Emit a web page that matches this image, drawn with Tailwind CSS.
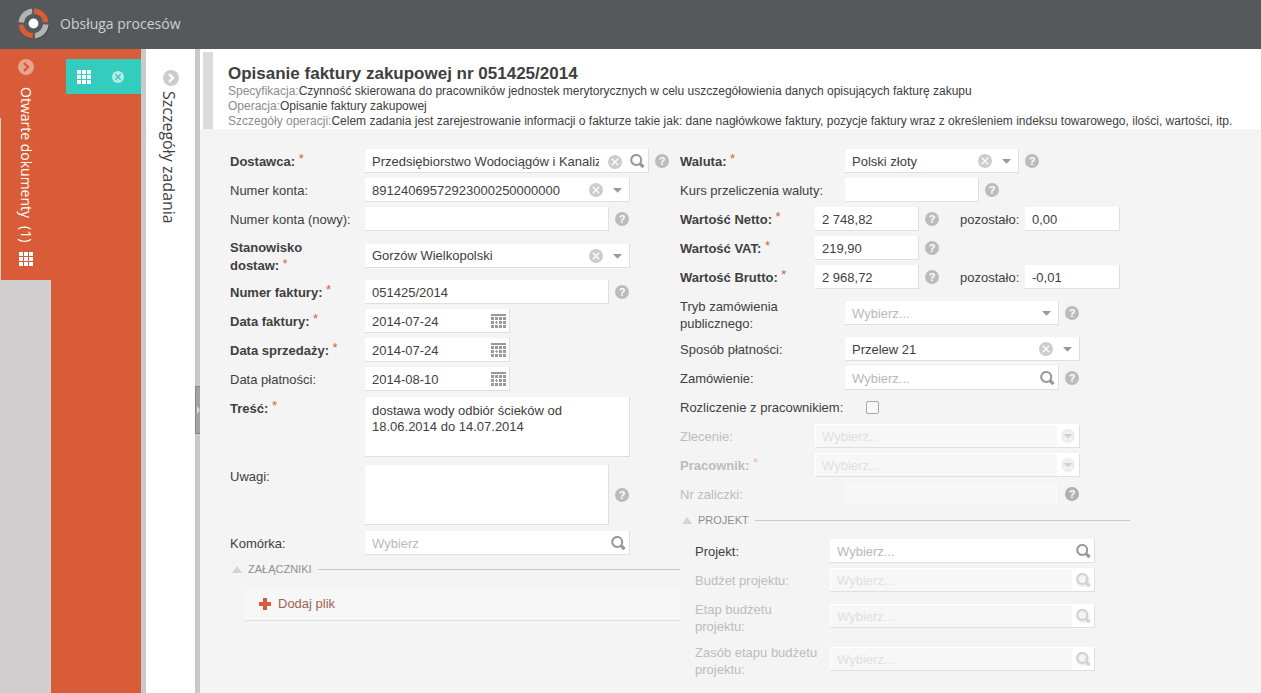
<!DOCTYPE html>
<html lang="pl">
<head>
<meta charset="utf-8">
<title>Obsługa procesów</title>
<script src="https://cdn.jsdelivr.net/npm/@tailwindcss/browser@4"></script>
</head>
<body class="flex min-h-screen flex-col bg-[#f4f4f4] font-['Liberation_Sans',Arial,sans-serif] text-[13px] text-[#404040]">

<svg class="hidden" aria-hidden="true">
  <symbol id="clear" viewBox="0 0 14 14"><circle cx="7" cy="7" r="7" fill="#cccccc"/><path d="M3.8 3.8l6.4 6.4M10.2 3.8l-6.4 6.4" stroke="#fff" stroke-width="1.3"/></symbol>
  <symbol id="search" viewBox="0 0 15 15"><circle cx="6.200" cy="6" r="5" fill="none" stroke="#999" stroke-width="2.100"/><path d="M10 9.600l3.500 3.500" stroke="#999" stroke-width="3.400"/></symbol>
  <symbol id="search-off" viewBox="0 0 15 15"><circle cx="7" cy="7" r="7" fill="#f0f0f0"/><circle cx="6.200" cy="6" r="5" fill="none" stroke="#d2d2d2" stroke-width="2.100"/><path d="M10 9.600l3.500 3.500" stroke="#d2d2d2" stroke-width="3.400"/><path d="M4 4l5 5M9 4l-5 5" stroke="#fff" stroke-width="1"/></symbol>
  <symbol id="caret" viewBox="0 0 9 5"><path d="M0 0h9L4.500 4.800z" fill="#999"/></symbol>
  <symbol id="caret-off" viewBox="0 0 14 14"><circle cx="7" cy="7" r="7" fill="#eeeeee"/><path d="M3.500 4l7 6.500M10.500 4l-7 6.500" stroke="#fff" stroke-width="1"/><path d="M2.500 5h9L7 9.500z" fill="#d2d2d2"/></symbol>
  <symbol id="calendar" viewBox="0 0 15 15"><path fill="#999" d="M0 0h15v2H0zM0 3h3v3H0zM4 3h3v3H4zM8 3h3v3H8zM12 3h3v3h-3zM0 7h3v3H0zM5 7h1v1h1v1H6v1H5V9H4V8h1zM8 7h3v3H8zM12 7h3v3h-3zM0 11h3v3H0zM4 11h3v3H4zM8 11h3v3H8zM12 11h3v3h-3z"/></symbol>
  <symbol id="grid" viewBox="0 0 14 14"><path fill="#fff" d="M0 0h4v4H0zM5 0h4v4H5zM10 0h4v4h-4zM0 5h4v4H0zM5 5h4v4H5zM10 5h4v4h-4zM0 10h4v4H0zM5 10h4v4H5zM10 10h4v4h-4z"/></symbol>
</svg>

<header class="flex h-[49px] shrink-0 items-center bg-[#55595c] pb-[2px] pl-[18px]">
  <svg class="size-8" viewBox="0 0 32 32" aria-hidden="true">
    <g fill="none" stroke-width="5.400">
      <g stroke="#3f4244"><path d="M18 4.300A12.200 12.200 0 0 1 28.300 15"/><path d="M28.400 17.500A12.200 12.200 0 0 1 17.800 28.400"/><path d="M14.500 28.500A12.200 12.200 0 0 1 4 18"/></g>
      <path d="M16 3.200A12.300 12.300 0 0 1 27.800 14.600" stroke="#d75c37"/>
      <path d="M27.800 16.500A12.300 12.300 0 0 1 16.800 27.700" stroke="#b3b3b3"/>
      <path d="M14.900 27.800A12.300 12.300 0 0 1 3.200 16.500" stroke="#d75c37"/>
      <path d="M3.200 14.500A12.300 12.300 0 0 1 14.200 3.300" stroke="#b3b3b3"/>
    </g>
    <path d="M13.500 0l2.600 3.200-2.600 3M31 13.500l-3.200 2.600-3-2.600M17.500 31l-2.600-3.200 2.600-3M0 17.500l3.200-2.600 3 2.600" fill="none" stroke="#55595c" stroke-width="1"/>
    <circle cx="15.500" cy="15.500" r="4.900" fill="#fff"/>
  </svg>
  <h1 class="ml-[10px] font-['Open_Sans',sans-serif] text-[14px] text-[#cfcfcf]">Obsługa procesów</h1>
</header>

<div class="flex flex-1">
  <nav class="relative flex w-[51px] shrink-0 flex-col bg-[#d0cece]" aria-label="Otwarte dokumenty">
    <div class="flex h-[231px] flex-col items-center bg-[#d75c37] pt-[10px]">
      <button aria-label="Rozwiń"><svg class="block size-4" viewBox="0 0 16 16"><circle cx="8" cy="8" r="8" fill="#e9a28c"/><path d="M6 4l4 4-4 4" fill="none" stroke="#d75c37" stroke-width="2.400"/></svg></button>
      <div class="mt-3 flex h-[160px] items-center gap-2 whitespace-nowrap font-['Open_Sans',sans-serif] text-[14px] leading-5 text-white [writing-mode:vertical-rl]"><span>Otwarte dokumenty</span><span>(1)</span></div>
      <svg class="mt-[5px] size-[14px]"><use href="#grid"/></svg>
    </div>
    <div class="absolute top-[69px] left-0 h-[162px] w-px bg-[#d0cece]"></div>
  </nav>

  <section class="w-[95px] shrink-0 border-r-[5px] border-[#c9c9c9] bg-[#d75c37] pt-[10px] pl-[15px]">
    <div class="flex h-[35px] items-center bg-[#34ccbe] pl-[11px]">
      <button aria-label="Dokument"><svg class="block size-[14px]"><use href="#grid"/></svg></button>
      <button class="ml-[21px]" aria-label="Zamknij dokument"><svg class="block size-3" viewBox="0 0 12 12"><circle cx="6" cy="6" r="6" fill="#b6ece7"/><path d="M3.300 3.300l5.400 5.400M8.700 3.300L3.300 8.700" stroke="#34ccbe" stroke-width="1.400"/></svg></button>
    </div>
  </section>

  <section class="relative flex w-[54px] shrink-0 flex-col items-center border-r-[5px] border-[#c9c9c9] bg-white pt-[21px]">
    <button aria-label="Rozwiń szczegóły"><svg class="block size-4" viewBox="0 0 16 16"><circle cx="8" cy="8" r="8" fill="#cccccc"/><path d="M6 4l4 4-4 4" fill="none" stroke="#fff" stroke-width="2.400"/></svg></button>
    <h2 class="mt-[5px] mr-1 whitespace-nowrap font-['Open_Sans',sans-serif] text-[16px] leading-5 text-[#404040] [writing-mode:vertical-rl]">Szczegóły zadania</h2>
    <button class="absolute top-[337px] -right-[5px] flex h-12 w-[5px] items-center border border-r-0 border-[#858585] bg-[#a3a3a3]" aria-label="Zwiń panel"><svg class="h-2 w-1" viewBox="0 0 4 8"><path d="M1 0l3 4-3 4z" fill="#ddd"/></svg></button>
  </section>

  <main class="min-w-0 flex-1">
    <div class="flex bg-white pt-[3px] pl-[3px]">
      <div class="w-[10px] shrink-0 bg-[#dcdcdc]"></div>
      <div class="h-[77px] pt-3 pl-[15px] text-[12px] leading-[15px] whitespace-nowrap">
        <h2 class="mb-[1px] text-[17px] leading-[19px] font-bold">Opisanie faktury zakupowej nr 051425/2014</h2>
        <p><span class="text-[#8c8c8c]">Specyfikacja:</span>Czynność skierowana do pracowników jednostek merytorycznych w celu uszczegółowienia danych opisujących fakturę zakupu</p>
        <p><span class="text-[#8c8c8c]">Operacja:</span>Opisanie faktury zakupowej</p>
        <p><span class="text-[#8c8c8c]">Szczegóły operacji:</span>Celem zadania jest zarejestrowanie informacji o fakturze takie jak: dane nagłówkowe faktury, pozycje faktury wraz z określeniem indeksu towarowego, ilości, wartości, itp.</p>
      </div>
    </div>

    <form class="grid max-w-[930px] grid-cols-2 pt-5 pl-[30px]">
      <div class="flex flex-col gap-[5px]">
        <div class="flex h-6 items-center">
          <label for="dostawca" class="w-[135px] shrink-0 pt-[2px] font-bold">Dostawca: <span class="align-[3px] leading-none font-normal text-[#d75c37]">*</span></label>
          <div class="flex h-6 w-[284px] items-center border-r border-b border-[#dfdfdf] bg-white pt-[2px] pr-[3px] pl-[7px]">
            <input id="dostawca" value="Przedsiębiorstwo Wodociągów i Kanalizacji" class="mr-[9px] h-full min-w-0 flex-1">
            <button type="button" aria-label="Wyczyść"><svg class="block size-[14px]"><use href="#clear"/></svg></button>
            <button type="button" class="ml-2" aria-label="Szukaj"><svg class="block size-[15px]"><use href="#search"/></svg></button>
          </div>
          <button type="button" class="ml-[6px] size-[14px] rounded-full bg-[#bbb] text-[11px] leading-[14px] font-bold text-white" aria-label="Pomoc">?</button>
        </div>
        <div class="flex h-6 items-center">
          <label for="konto" class="w-[135px] shrink-0 pt-[2px]">Numer konta:</label>
          <div class="relative h-6 w-[265px] border-r border-b border-[#dfdfdf] bg-white">
            <select id="konto" class="block h-full w-full appearance-none pt-[2px] pl-[7px]"><option>89124069572923000250000000</option></select>
            <button type="button" class="absolute top-[5px] right-[26px]" aria-label="Wyczyść"><svg class="block size-[14px]"><use href="#clear"/></svg></button>
            <svg class="pointer-events-none absolute top-[10px] right-[7px] h-[5px] w-[9px]"><use href="#caret"/></svg>
          </div>
        </div>
        <div class="flex h-6 items-center">
          <label for="konto-nowe" class="w-[135px] shrink-0 pt-[2px]">Numer konta (nowy):</label>
          <input id="konto-nowe" class="h-6 w-[244px] border-r border-b border-[#dfdfdf] bg-white px-[7px] pt-[2px]">
          <button type="button" class="ml-[6px] size-[14px] rounded-full bg-[#bbb] text-[11px] leading-[14px] font-bold text-white" aria-label="Pomoc">?</button>
        </div>
        <div class="flex h-[39px] items-center">
          <label for="stanowisko" class="w-[135px] shrink-0 pt-[3px] pr-10 leading-[18px] font-bold">Stanowisko dostaw: <span class="align-[2px] text-[12px] leading-none font-normal text-[#d75c37]">*</span></label>
          <div class="relative h-6 w-[265px] border-r border-b border-[#dfdfdf] bg-white">
            <select id="stanowisko" class="block h-full w-full appearance-none pt-[2px] pl-[7px]"><option>Gorzów Wielkopolski</option></select>
            <button type="button" class="absolute top-[5px] right-[26px]" aria-label="Wyczyść"><svg class="block size-[14px]"><use href="#clear"/></svg></button>
            <svg class="pointer-events-none absolute top-[10px] right-[7px] h-[5px] w-[9px]"><use href="#caret"/></svg>
          </div>
        </div>
        <div class="flex h-6 items-center">
          <label for="nr-faktury" class="w-[135px] shrink-0 pt-[2px] font-bold">Numer faktury: <span class="align-[3px] leading-none font-normal text-[#d75c37]">*</span></label>
          <input id="nr-faktury" value="051425/2014" class="h-6 w-[244px] border-r border-b border-[#dfdfdf] bg-white px-[7px] pt-[2px]">
          <button type="button" class="ml-[6px] size-[14px] rounded-full bg-[#bbb] text-[11px] leading-[14px] font-bold text-white" aria-label="Pomoc">?</button>
        </div>
        <div class="flex h-6 items-center">
          <label for="data-faktury" class="w-[135px] shrink-0 pt-[2px] font-bold">Data faktury: <span class="align-[3px] leading-none font-normal text-[#d75c37]">*</span></label>
          <div class="flex h-6 w-[145px] items-center border-r border-b border-[#dfdfdf] bg-white pt-[2px] pr-[3px] pl-[7px]">
            <input id="data-faktury" value="2014-07-24" class="h-full min-w-0 flex-1">
            <button type="button" aria-label="Kalendarz"><svg class="block size-[15px]"><use href="#calendar"/></svg></button>
          </div>
        </div>
        <div class="flex h-6 items-center">
          <label for="data-sprzedazy" class="w-[135px] shrink-0 pt-[2px] font-bold">Data sprzedaży: <span class="align-[3px] leading-none font-normal text-[#d75c37]">*</span></label>
          <div class="flex h-6 w-[145px] items-center border-r border-b border-[#dfdfdf] bg-white pt-[2px] pr-[3px] pl-[7px]">
            <input id="data-sprzedazy" value="2014-07-24" class="h-full min-w-0 flex-1">
            <button type="button" aria-label="Kalendarz"><svg class="block size-[15px]"><use href="#calendar"/></svg></button>
          </div>
        </div>
        <div class="flex h-6 items-center">
          <label for="data-platnosci" class="w-[135px] shrink-0 pt-[2px]">Data płatności:</label>
          <div class="flex h-6 w-[145px] items-center border-r border-b border-[#dfdfdf] bg-white pt-[2px] pr-[3px] pl-[7px]">
            <input id="data-platnosci" value="2014-08-10" class="h-full min-w-0 flex-1">
            <button type="button" aria-label="Kalendarz"><svg class="block size-[15px]"><use href="#calendar"/></svg></button>
          </div>
        </div>
        <div class="mt-[1px] flex">
          <label for="tresc" class="w-[135px] shrink-0 pt-[2px] font-bold">Treść: <span class="align-[3px] leading-none font-normal text-[#d75c37]">*</span></label>
          <textarea id="tresc" class="h-[60px] w-[265px] resize-none border-r border-b border-[#dfdfdf] bg-white px-[7px] pt-[6px] pr-12 leading-4">dostawa wody odbiór ścieków od 18.06.2014 do 14.07.2014</textarea>
        </div>
        <div class="mt-[3px] flex">
          <label for="uwagi" class="w-[135px] shrink-0 pt-[2px]">Uwagi:</label>
          <textarea id="uwagi" class="h-[60px] w-[244px] resize-none border-r border-b border-[#dfdfdf] bg-white px-[7px] pt-[6px] leading-4"></textarea>
          <button type="button" class="ml-[6px] size-[14px] self-center rounded-full bg-[#bbb] text-[11px] leading-[14px] font-bold text-white" aria-label="Pomoc">?</button>
        </div>
        <div class="mt-[1px] flex h-6 items-center">
          <label for="komorka" class="w-[135px] shrink-0 pt-[2px]">Komórka:</label>
          <div class="flex h-6 w-[265px] items-center border-r border-b border-[#dfdfdf] bg-white pt-[2px] pr-[3px] pl-[7px]">
            <input id="komorka" placeholder="Wybierz" class="h-full min-w-0 flex-1 placeholder:text-[#b8b8b8]">
            <button type="button" aria-label="Szukaj"><svg class="block size-[15px]"><use href="#search"/></svg></button>
          </div>
        </div>
        <div class="mt-[1px] flex items-center pl-[2px] text-[11px] leading-4 text-[#8f8f8f]">
          <svg class="h-[7px] w-[10px]" viewBox="0 0 10 7"><path d="M5 0l5 7H0z" fill="#d4d4d4"/></svg>
          <h3 class="mr-[6px] ml-[6px]">ZAŁĄCZNIKI</h3>
          <div class="h-px flex-1 bg-[#c9c9c9]"></div>
        </div>
        <div class="mt-[6px] ml-[15px] flex h-[33px] items-center border-b border-[#dfdfdf] bg-[#f7f7f7] pl-[14px]">
          <button type="button" class="flex items-center gap-[7px] text-[#a0624f]"><svg class="size-3" viewBox="0 0 12 12"><path d="M4 0h4v4h4v4H8v4H4V8H0V4h4z" fill="#d75c37"/></svg>Dodaj plik</button>
        </div>
      </div>

      <div class="flex flex-col gap-[5px]">
        <div class="flex h-6 items-center">
          <label for="waluta" class="w-[165px] shrink-0 pt-[2px] font-bold">Waluta: <span class="align-[3px] leading-none font-normal text-[#d75c37]">*</span></label>
          <div class="relative h-6 w-[174px] border-r border-b border-[#dfdfdf] bg-white">
            <select id="waluta" class="block h-full w-full appearance-none pt-[2px] pl-[7px]"><option>Polski złoty</option></select>
            <button type="button" class="absolute top-[5px] right-[26px]" aria-label="Wyczyść"><svg class="block size-[14px]"><use href="#clear"/></svg></button>
            <svg class="pointer-events-none absolute top-[10px] right-[7px] h-[5px] w-[9px]"><use href="#caret"/></svg>
          </div>
          <button type="button" class="ml-[6px] size-[14px] rounded-full bg-[#bbb] text-[11px] leading-[14px] font-bold text-white" aria-label="Pomoc">?</button>
        </div>
        <div class="flex h-6 items-center">
          <label for="kurs" class="w-[165px] shrink-0 pt-[2px]">Kurs przeliczenia waluty:</label>
          <input id="kurs" class="h-6 w-[134px] border-r border-b border-[#dfdfdf] bg-white px-[7px] pt-[2px]">
          <button type="button" class="ml-[6px] size-[14px] rounded-full bg-[#bbb] text-[11px] leading-[14px] font-bold text-white" aria-label="Pomoc">?</button>
        </div>
        <div class="flex h-6 items-center">
          <label for="netto" class="w-[135px] shrink-0 pt-[2px] font-bold">Wartość Netto: <span class="align-[3px] leading-none font-normal text-[#d75c37]">*</span></label>
          <input id="netto" value="2 748,82" class="h-6 w-[104px] border-r border-b border-[#dfdfdf] bg-white px-[7px] pt-[2px]">
          <button type="button" class="ml-[6px] size-[14px] rounded-full bg-[#bbb] text-[11px] leading-[14px] font-bold text-white" aria-label="Pomoc">?</button>
          <label for="netto-reszta" class="ml-[21px] w-[65px] pt-[2px]">pozostało:</label>
          <input id="netto-reszta" value="0,00" class="h-6 w-[95px] border-r border-b border-[#dfdfdf] bg-white px-[7px] pt-[2px]">
        </div>
        <div class="flex h-6 items-center">
          <label for="vat" class="w-[135px] shrink-0 pt-[2px] font-bold">Wartość VAT: <span class="align-[3px] leading-none font-normal text-[#d75c37]">*</span></label>
          <input id="vat" value="219,90" class="h-6 w-[104px] border-r border-b border-[#dfdfdf] bg-white px-[7px] pt-[2px]">
          <button type="button" class="ml-[6px] size-[14px] rounded-full bg-[#bbb] text-[11px] leading-[14px] font-bold text-white" aria-label="Pomoc">?</button>
        </div>
        <div class="flex h-6 items-center">
          <label for="brutto" class="w-[135px] shrink-0 pt-[2px] font-bold">Wartość Brutto: <span class="align-[3px] leading-none font-normal text-[#d75c37]">*</span></label>
          <input id="brutto" value="2 968,72" class="h-6 w-[104px] border-r border-b border-[#dfdfdf] bg-white px-[7px] pt-[2px]">
          <button type="button" class="ml-[6px] size-[14px] rounded-full bg-[#bbb] text-[11px] leading-[14px] font-bold text-white" aria-label="Pomoc">?</button>
          <label for="brutto-reszta" class="ml-[21px] w-[65px] pt-[2px]">pozostało:</label>
          <input id="brutto-reszta" value="-0,01" class="h-6 w-[95px] border-r border-b border-[#dfdfdf] bg-white px-[7px] pt-[2px]">
        </div>
        <div class="flex h-[38px] items-center">
          <label for="tryb" class="w-[165px] shrink-0 pt-[3px] pr-10 leading-[17px]">Tryb zamówienia publicznego:</label>
          <div class="relative h-6 w-[214px] border-r border-b border-[#dfdfdf] bg-white">
            <select id="tryb" class="block h-full w-full appearance-none pt-[2px] pl-[7px] text-[#b8b8b8]"><option>Wybierz...</option></select>
            <svg class="pointer-events-none absolute top-[10px] right-[7px] h-[5px] w-[9px]"><use href="#caret"/></svg>
          </div>
          <button type="button" class="ml-[6px] size-[14px] rounded-full bg-[#bbb] text-[11px] leading-[14px] font-bold text-white" aria-label="Pomoc">?</button>
        </div>
        <div class="flex h-6 items-center">
          <label for="sposob" class="w-[165px] shrink-0 pt-[2px]">Sposób płatności:</label>
          <div class="relative h-6 w-[235px] border-r border-b border-[#dfdfdf] bg-white">
            <select id="sposob" class="block h-full w-full appearance-none pt-[2px] pl-[7px]"><option>Przelew 21</option></select>
            <button type="button" class="absolute top-[5px] right-[26px]" aria-label="Wyczyść"><svg class="block size-[14px]"><use href="#clear"/></svg></button>
            <svg class="pointer-events-none absolute top-[10px] right-[7px] h-[5px] w-[9px]"><use href="#caret"/></svg>
          </div>
        </div>
        <div class="flex h-6 items-center">
          <label for="zamowienie" class="w-[165px] shrink-0 pt-[2px]">Zamówienie:</label>
          <div class="flex h-6 w-[214px] items-center border-r border-b border-[#dfdfdf] bg-white pt-[2px] pr-[3px] pl-[7px]">
            <input id="zamowienie" placeholder="Wybierz..." class="h-full min-w-0 flex-1 placeholder:text-[#b8b8b8]">
            <button type="button" aria-label="Szukaj"><svg class="block size-[15px]"><use href="#search"/></svg></button>
          </div>
          <button type="button" class="ml-[6px] size-[14px] rounded-full bg-[#bbb] text-[11px] leading-[14px] font-bold text-white" aria-label="Pomoc">?</button>
        </div>
        <div class="flex h-6 items-center">
          <label for="rozliczenie" class="w-[186px] shrink-0 pt-[2px]">Rozliczenie z pracownikiem:</label>
          <input id="rozliczenie" type="checkbox" class="size-[13px] appearance-none rounded-[2px] border border-[#a8a8a8] bg-[#f8f8f8] checked:bg-[#999]">
        </div>
        <div class="flex h-6 items-center">
          <label for="zlecenie" class="w-[135px] shrink-0 pt-[2px] text-[#bcbcbc]">Zlecenie:</label>
          <div class="relative h-6 w-[265px] border border-t-white border-r-[#dfdfdf] border-b-[#dfdfdf] border-l-white bg-white pr-[22px]">
            <select id="zlecenie" disabled class="block h-full w-full appearance-none bg-[#f7f7f7] pt-[2px] pl-[6px] text-[#e0e0e0] opacity-100"><option>Wybierz...</option></select>
            <svg class="pointer-events-none absolute top-1 right-1 size-[14px]"><use href="#caret-off"/></svg>
          </div>
        </div>
        <div class="flex h-6 items-center">
          <label for="pracownik" class="w-[135px] shrink-0 pt-[2px] font-bold text-[#bcbcbc]">Pracownik: <span class="align-[3px] leading-none font-normal text-[#efb9a8]">*</span></label>
          <div class="relative h-6 w-[265px] border border-t-white border-r-[#dfdfdf] border-b-[#dfdfdf] border-l-white bg-white pr-[22px]">
            <select id="pracownik" disabled class="block h-full w-full appearance-none bg-[#f7f7f7] pt-[2px] pl-[6px] text-[#e0e0e0] opacity-100"><option>Wybierz...</option></select>
            <svg class="pointer-events-none absolute top-1 right-1 size-[14px]"><use href="#caret-off"/></svg>
          </div>
        </div>
        <div class="flex h-6 items-center">
          <label for="zaliczka" class="w-[165px] shrink-0 pt-[2px] text-[#bcbcbc]">Nr zaliczki:</label>
          <input id="zaliczka" disabled class="h-6 w-[214px] border-r border-b border-[#efefef] bg-[#f7f7f7] px-[7px]">
          <button type="button" class="ml-[6px] size-[14px] rounded-full bg-[#b0b0b0] text-[11px] leading-[14px] font-bold text-white" aria-label="Pomoc">?</button>
        </div>
        <div class="mt-[1px] flex items-center pl-[2px] text-[11px] leading-4 text-[#8f8f8f]">
          <svg class="h-[7px] w-[10px]" viewBox="0 0 10 7"><path d="M5 0l5 7H0z" fill="#d4d4d4"/></svg>
          <h3 class="mr-[6px] ml-[6px]">PROJEKT</h3>
          <div class="h-px flex-1 bg-[#c9c9c9]"></div>
        </div>
        <div class="mt-[6px] flex h-6 items-center pl-[15px]">
          <label for="projekt" class="w-[135px] shrink-0 pt-[2px]">Projekt:</label>
          <div class="flex h-6 w-[265px] items-center border-r border-b border-[#dfdfdf] bg-white pt-[2px] pr-[3px] pl-[7px]">
            <input id="projekt" placeholder="Wybierz..." class="h-full min-w-0 flex-1 placeholder:text-[#b8b8b8]">
            <button type="button" aria-label="Szukaj"><svg class="block size-[15px]"><use href="#search"/></svg></button>
          </div>
        </div>
        <div class="flex h-6 items-center pl-[15px]">
          <label for="budzet" class="w-[135px] shrink-0 pt-[2px] text-[#bcbcbc]">Budżet projektu:</label>
          <div class="flex h-6 w-[265px] items-center border border-t-white border-r-[#dfdfdf] border-b-[#dfdfdf] border-l-white bg-white pr-[3px]">
            <input id="budzet" disabled placeholder="Wybierz..." class="h-full min-w-0 flex-1 bg-[#f7f7f7] pl-[6px] placeholder:text-[#e0e0e0]">
            <button type="button" disabled class="ml-1" aria-label="Szukaj"><svg class="block size-[15px]"><use href="#search-off"/></svg></button>
          </div>
        </div>
        <div class="flex h-[38px] items-center pl-[15px]">
          <label for="etap" class="w-[135px] shrink-0 pt-[3px] pr-6 leading-[17px] text-[#bcbcbc]">Etap budżetu projektu:</label>
          <div class="flex h-6 w-[265px] items-center border border-t-white border-r-[#dfdfdf] border-b-[#dfdfdf] border-l-white bg-white pr-[3px]">
            <input id="etap" disabled placeholder="Wybierz..." class="h-full min-w-0 flex-1 bg-[#f7f7f7] pl-[6px] placeholder:text-[#e0e0e0]">
            <button type="button" disabled class="ml-1" aria-label="Szukaj"><svg class="block size-[15px]"><use href="#search-off"/></svg></button>
          </div>
        </div>
        <div class="flex h-[38px] items-center pl-[15px]">
          <label for="zasob" class="w-[135px] shrink-0 pt-[3px] leading-[17px] text-[#bcbcbc]">Zasób etapu budżetu projektu:</label>
          <div class="flex h-6 w-[265px] items-center border border-t-white border-r-[#dfdfdf] border-b-[#dfdfdf] border-l-white bg-white pr-[3px]">
            <input id="zasob" disabled placeholder="Wybierz..." class="h-full min-w-0 flex-1 bg-[#f7f7f7] pl-[6px] placeholder:text-[#e0e0e0]">
            <button type="button" disabled class="ml-1" aria-label="Szukaj"><svg class="block size-[15px]"><use href="#search-off"/></svg></button>
          </div>
        </div>
      </div>
    </form>
  </main>
</div>
</body>
</html>
